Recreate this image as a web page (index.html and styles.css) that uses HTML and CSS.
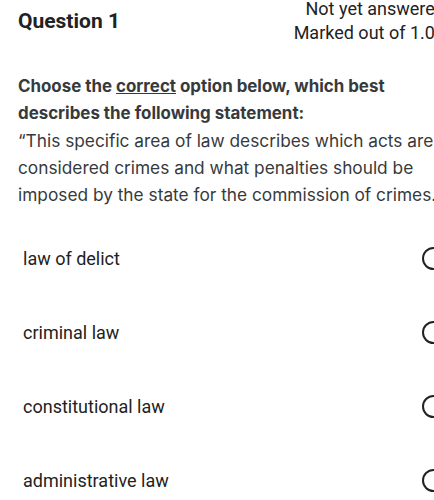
FILE: index.html
```html
<!DOCTYPE html>
<html lang="en">
<head>
    <meta charset="UTF-8">
    <meta name="viewport" content="width=device-width, initial-scale=1.0">
    <title>Question 1</title>
    <link rel="stylesheet" href="styles.css">
</head>
<body>
    <div class="quiz">
        <div class="info">
            <h3 class="qno">Question 1</h3>
            <div class="state">
                <div>Not yet answered</div>
                <div>Marked out of 1.00</div>
            </div>
        </div>

        <div class="qtext">
            <p class="lead">Choose the <u>correct</u> option below, which best describes the following statement:</p>
            <p>&ldquo;This specific area of law describes which acts are considered crimes and what penalties should be imposed by the state for the commission of crimes.&rdquo;</p>
        </div>

        <div class="answers">
            <label class="option"><span>law of delict</span><span class="radio"></span></label>
            <label class="option"><span>criminal law</span><span class="radio"></span></label>
            <label class="option"><span>constitutional law</span><span class="radio"></span></label>
            <label class="option"><span>administrative law</span><span class="radio"></span></label>
        </div>
    </div>
</body>
</html>
```

FILE: styles.css
```css
*{
    margin: 0;
    padding: 0;
    box-sizing: border-box;
}
body{
    background: #fff;
    overflow: hidden;
    font-family: Roboto, sans-serif;
    color: #1d1d1d;
}
.quiz{
    width: 470px;
    padding: 0 0 0 18px;
}
.info{
    display: flex;
    justify-content: space-between;
    align-items: flex-start;
}
.info .qno{
    font-size: 21px;
    font-weight: 700;
    margin-top: 9px;
    color: #222;
}
.info .state{
    font-size: 18px;
    line-height: 24px;
    margin-top: -3px;
    margin-right: 25px;
    text-align: right;
    color: #222;
}
.qtext{
    margin-top: 28px;
    font-family: Inter, sans-serif;
    font-size: 17.3px;
    line-height: 27px;
    color: #373a3c;
    width: 440px;
}
.qtext .lead{
    font-size: 16.9px;
    font-weight: 700;
    width: 380px;
}
.answers{
    margin-top: 13px;
}
.option{
    display: flex;
    justify-content: space-between;
    align-items: center;
    height: 74px;
    padding-left: 5px;
    font-size: 18px;
    color: #222;
}
.option .radio{
    width: 23px;
    height: 23px;
    border: 2px solid #222;
    border-radius: 50%;
    margin-right: 25px;
}
```
